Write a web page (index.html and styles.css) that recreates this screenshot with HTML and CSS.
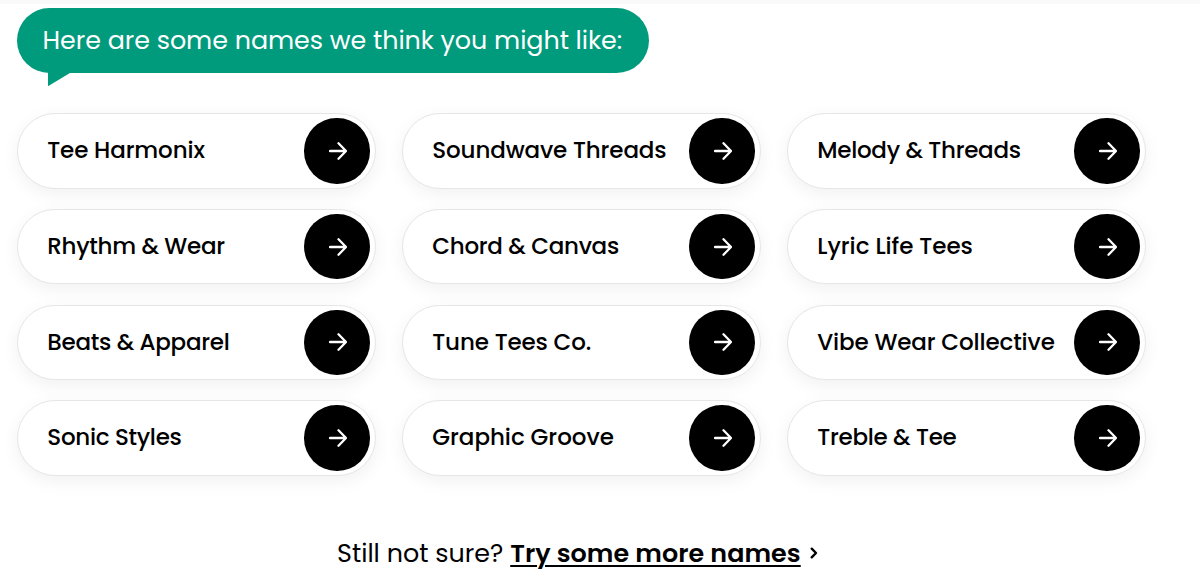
FILE: index.html
```html
<!DOCTYPE html>
<html lang="en">
<head>
<meta charset="utf-8">
<title>Name ideas</title>
<link rel="stylesheet" href="styles.css">
</head>
<body>
<svg class="defs" aria-hidden="true"><symbol id="arrow" viewBox="0 0 18 18"><path d="M1 9H16.8M9.5 1.3L17 9L9.5 16.7"/></symbol></svg>
<main class="page">
  <h1 class="bubble">Here are some names we think you might like:</h1>
  <div class="grid">
    <a class="card" href="#"><span class="name">Tee Harmonix</span><span class="go"><svg class="arrow"><use href="#arrow"/></svg></span></a>
    <a class="card" href="#"><span class="name">Soundwave Threads</span><span class="go"><svg class="arrow"><use href="#arrow"/></svg></span></a>
    <a class="card" href="#"><span class="name tight">Melody &amp; Threads</span><span class="go"><svg class="arrow"><use href="#arrow"/></svg></span></a>
    <a class="card" href="#"><span class="name tight">Rhythm &amp; Wear</span><span class="go"><svg class="arrow"><use href="#arrow"/></svg></span></a>
    <a class="card" href="#"><span class="name tight">Chord &amp; Canvas</span><span class="go"><svg class="arrow"><use href="#arrow"/></svg></span></a>
    <a class="card" href="#"><span class="name loose">Lyric Life Tees</span><span class="go"><svg class="arrow"><use href="#arrow"/></svg></span></a>
    <a class="card" href="#"><span class="name tight">Beats &amp; Apparel</span><span class="go"><svg class="arrow"><use href="#arrow"/></svg></span></a>
    <a class="card" href="#"><span class="name">Tune Tees Co.</span><span class="go"><svg class="arrow"><use href="#arrow"/></svg></span></a>
    <a class="card" href="#"><span class="name">Vibe Wear Collective</span><span class="go"><svg class="arrow"><use href="#arrow"/></svg></span></a>
    <a class="card" href="#"><span class="name tight">Sonic Styles</span><span class="go"><svg class="arrow"><use href="#arrow"/></svg></span></a>
    <a class="card" href="#"><span class="name loose">Graphic Groove</span><span class="go"><svg class="arrow"><use href="#arrow"/></svg></span></a>
    <a class="card" href="#"><span class="name tight">Treble &amp; Tee</span><span class="go"><svg class="arrow"><use href="#arrow"/></svg></span></a>
  </div>
  <p class="more"><span>Still not sure?</span><a class="more-link" href="#">Try some more names</a><svg class="chevron" viewBox="0 0 8 12"><path d="M1.7 1.7L6 6L1.7 10.3"/></svg></p>
</main>
</body>
</html>
```
FILE: styles.css
```css
body { margin: 0; background: #fff; color: #000; font-family: Poppins, Inter, sans-serif; border-top: 4px solid #fafafa; }
.defs { display: none; }
.page { padding: 3.7px 16.6px 0; }
.bubble { position: relative; box-sizing: border-box; width: 632.8px; margin: 0 0 40.5px; height: 65px; line-height: 65px; font-size: 25.4px; font-weight: 400; letter-spacing: -0.04px; background: #009b7c; color: #fff; padding-left: 26px; border-radius: 33px; white-space: nowrap; }
.bubble::after { content: ""; position: absolute; left: 31.4px; top: 64px; width: 24px; height: 14.5px; background: #009b7c; clip-path: polygon(0 0, 100% 0, 0 100%); }
.grid { display: grid; grid-template-columns: repeat(3, 359px); grid-auto-rows: 75.4px; gap: 20.3px 26px; }
.card { display: flex; align-items: center; justify-content: space-between; box-sizing: border-box; padding: 0 4.8px 0 29.7px; border: 1px solid #e6e6e6; border-radius: 38px; background: #fff; box-shadow: 0 5px 18px rgba(0, 0, 0, 0.06); color: #000; text-decoration: none; }
.name { padding-bottom: 1.4px; font-size: 23px; font-weight: 500; letter-spacing: -0.13px; white-space: nowrap; }
.tight { letter-spacing: -0.29px; }
.loose { letter-spacing: -0.03px; }
.go { display: flex; align-items: center; justify-content: center; width: 65.4px; height: 65.4px; border-radius: 50%; background: #000; }
.arrow { width: 18px; height: 18px; margin: 0 0 0 1px; fill: none; stroke: #fff; stroke-width: 2.3; stroke-linecap: round; stroke-linejoin: round; }
.more { display: flex; align-items: center; margin: 58px 0 0 320.4px; font-size: 25.4px; line-height: 38px; white-space: nowrap; }
.more-link { margin-left: 7px; font-weight: 600; letter-spacing: 0.05px; color: #000; text-decoration-thickness: 2px; text-underline-offset: 2.6px; }
.chevron { width: 8px; height: 12px; margin-left: 9px; fill: none; stroke: #000; stroke-width: 2.4; stroke-linecap: round; stroke-linejoin: round; }
```
